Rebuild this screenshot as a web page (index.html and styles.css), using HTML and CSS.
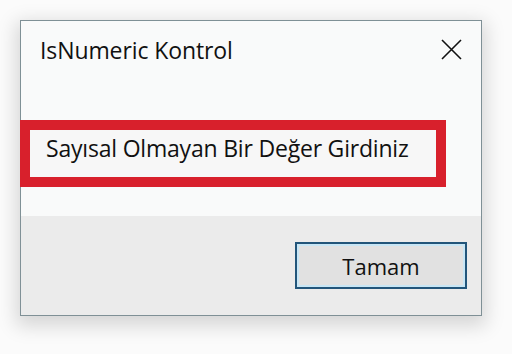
FILE: index.html
```html
<!DOCTYPE html>
<html lang="tr">
<head>
<meta charset="utf-8">
<link rel="stylesheet" href="styles.css">
</head>
<body>
<div class="dialog">
  <div class="titlebar">
    <span class="title">IsNumeric Kontrol</span>
    <svg class="close" width="21" height="21" viewBox="0 0 21 21"><path d="M1 1L20 20M20 1L1 20" stroke="#111" stroke-width="1.6" fill="none"/></svg>
  </div>
  <div class="content">
    <div class="highlight"><span class="message">Sayısal Olmayan Bir Değer Girdiniz</span></div>
  </div>
  <div class="footer">
    <button class="ok">Tamam</button>
  </div>
</div>
</body>
</html>
```
FILE: styles.css
```css
html, body {
  margin: 0;
  padding: 0;
}
body {
  width: 512px;
  height: 354px;
  background: #fbfbfb;
  padding: 20px 0 0 20px;
  box-sizing: border-box;
  font-family: "Open Sans", "Noto Sans", sans-serif;
  color: #111;
}
.dialog {
  width: 462px;
  height: 296px;
  box-sizing: border-box;
  border: 1px solid #7f9096;
  background: #f9fafa;
  display: flex;
  flex-direction: column;
  box-shadow: 0 6px 18px 4px rgba(0, 0, 0, 0.15);
}
.titlebar {
  height: 45px;
  box-sizing: border-box;
  padding: 17px 19px 0 19px;
  display: flex;
  justify-content: space-between;
  align-items: flex-start;
}
.title {
  font-size: 23px;
  line-height: 24px;
  letter-spacing: -0.1px;
}
.close {
  margin-top: 1px;
  display: block;
}
.content {
  height: 150px;
  box-sizing: border-box;
  padding-top: 54px;
}
.highlight {
  margin-left: -1px;
  width: 426px;
  height: 67px;
  box-sizing: border-box;
  border: 10px solid #d8202c;
  background: #f7f7f7;
  padding: 6px 0 0 16px;
}
.message {
  font-size: 23px;
  line-height: 24px;
  letter-spacing: -0.2px;
}
.footer {
  flex: 1;
  background: #ebebeb;
  display: flex;
  justify-content: flex-end;
  align-items: flex-start;
  padding: 26px 14px 0 0;
}
.ok {
  width: 172px;
  height: 47px;
  border: 2px solid #22557a;
  box-shadow: inset 0 0 0 2px #c8e6f5;
  background: #e1e1e1;
  font-family: "Open Sans", "Noto Sans", sans-serif;
  font-size: 22px;
  color: #111;
  padding: 0;
  margin: 0;
}
```
